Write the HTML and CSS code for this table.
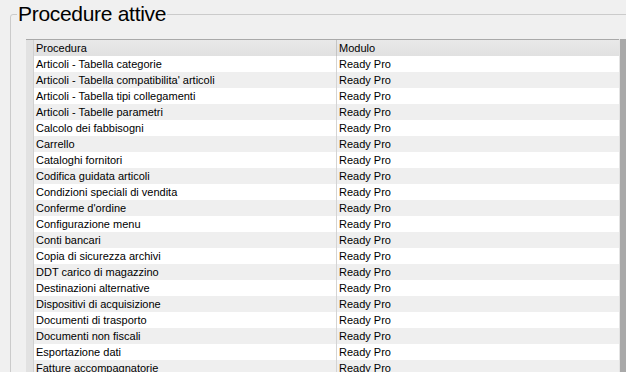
FILE: index.html
```html
<!DOCTYPE html>
<html lang="it">
<head>
  <meta charset="UTF-8">
  <title>Procedure attive</title>
  <link rel="stylesheet" href="styles.css">
</head>
<body>
  <fieldset class="group">
    <legend class="group-title">Procedure attive</legend>

    <div class="grid-box">
      <div class="grid">
        <div class="grid-row grid-head">
          <div class="row-mark"></div>
          <div class="cell">Procedura</div>
          <div class="cell cell-last">Modulo</div>
        </div>
        <div class="grid-row"><div class="row-mark"></div><div class="cell">Articoli - Tabella categorie</div><div class="cell cell-last">Ready Pro</div></div>
        <div class="grid-row"><div class="row-mark"></div><div class="cell">Articoli - Tabella compatibilita' articoli</div><div class="cell cell-last">Ready Pro</div></div>
        <div class="grid-row"><div class="row-mark"></div><div class="cell">Articoli - Tabella tipi collegamenti</div><div class="cell cell-last">Ready Pro</div></div>
        <div class="grid-row"><div class="row-mark"></div><div class="cell">Articoli - Tabelle parametri</div><div class="cell cell-last">Ready Pro</div></div>
        <div class="grid-row"><div class="row-mark"></div><div class="cell">Calcolo dei fabbisogni</div><div class="cell cell-last">Ready Pro</div></div>
        <div class="grid-row"><div class="row-mark"></div><div class="cell">Carrello</div><div class="cell cell-last">Ready Pro</div></div>
        <div class="grid-row"><div class="row-mark"></div><div class="cell">Cataloghi fornitori</div><div class="cell cell-last">Ready Pro</div></div>
        <div class="grid-row"><div class="row-mark"></div><div class="cell">Codifica guidata articoli</div><div class="cell cell-last">Ready Pro</div></div>
        <div class="grid-row"><div class="row-mark"></div><div class="cell">Condizioni speciali di vendita</div><div class="cell cell-last">Ready Pro</div></div>
        <div class="grid-row"><div class="row-mark"></div><div class="cell">Conferme d'ordine</div><div class="cell cell-last">Ready Pro</div></div>
        <div class="grid-row"><div class="row-mark"></div><div class="cell">Configurazione menu</div><div class="cell cell-last">Ready Pro</div></div>
        <div class="grid-row"><div class="row-mark"></div><div class="cell">Conti bancari</div><div class="cell cell-last">Ready Pro</div></div>
        <div class="grid-row"><div class="row-mark"></div><div class="cell">Copia di sicurezza archivi</div><div class="cell cell-last">Ready Pro</div></div>
        <div class="grid-row"><div class="row-mark"></div><div class="cell">DDT carico di magazzino</div><div class="cell cell-last">Ready Pro</div></div>
        <div class="grid-row"><div class="row-mark"></div><div class="cell">Destinazioni alternative</div><div class="cell cell-last">Ready Pro</div></div>
        <div class="grid-row"><div class="row-mark"></div><div class="cell">Dispositivi di acquisizione</div><div class="cell cell-last">Ready Pro</div></div>
        <div class="grid-row"><div class="row-mark"></div><div class="cell">Documenti di trasporto</div><div class="cell cell-last">Ready Pro</div></div>
        <div class="grid-row"><div class="row-mark"></div><div class="cell">Documenti non fiscali</div><div class="cell cell-last">Ready Pro</div></div>
        <div class="grid-row"><div class="row-mark"></div><div class="cell">Esportazione dati</div><div class="cell cell-last">Ready Pro</div></div>
        <div class="grid-row"><div class="row-mark"></div><div class="cell">Fatture accompagnatorie</div><div class="cell cell-last">Ready Pro</div></div>
      </div>
      <div class="vscroll"></div>
    </div>
  </fieldset>
</body>
</html>
```

FILE: styles.css
```css
* {
  box-sizing: border-box;
}

html,
body {
  height: 100%;
}

body {
  margin: 0;
  background: #f0f0f0;
  color: #000;
  font-family: "Liberation Sans", Arial, sans-serif;
  overflow: hidden;
}

/* riquadro con titolo */
.group {
  margin: 0 0 0 10px;
  padding: 0 0 0 15px;
  width: 660px;
  min-height: 420px;
  border: 1px solid #cbcbcb;
  border-radius: 3px;
}

.group-title {
  margin-left: -9px;
  padding: 0 1px;
  font-size: 21px;
  line-height: 28px;
  letter-spacing: -0.3px;
  color: #000;
}

/* griglia procedure */
.grid-box {
  display: flex;
  margin-top: 11px;
  width: 611px;
}

.grid {
  width: 593px;
  font-size: 11px;
}

.grid-row {
  display: grid;
  grid-template-columns: 8px 302px 1fr;
  height: 16px;
  line-height: 16px;
  background: #fff;
}

.grid-row:nth-child(odd) {
  background: #efefef;
}

.grid-row.grid-head {
  height: 17px;
  background: linear-gradient(#e9e9e9, #e1e1e1);
  border-top: 1px solid #a9a9a9;
}

.row-mark {
  background: #e2e2e2;
  border-right: 1px solid #d0d0d0;
}

.cell {
  padding-left: 2px;
  white-space: nowrap;
  overflow: hidden;
}

.cell-last {
  border-left: 1px solid #d4d4d4;
  padding-left: 2px;
}

.grid-head .cell-last {
  border-left-color: #c4c4c4;
}

.vscroll {
  width: 18px;
  background: #a9a9a9;
  border-left: 1px solid #e4e4e4;
}
```
